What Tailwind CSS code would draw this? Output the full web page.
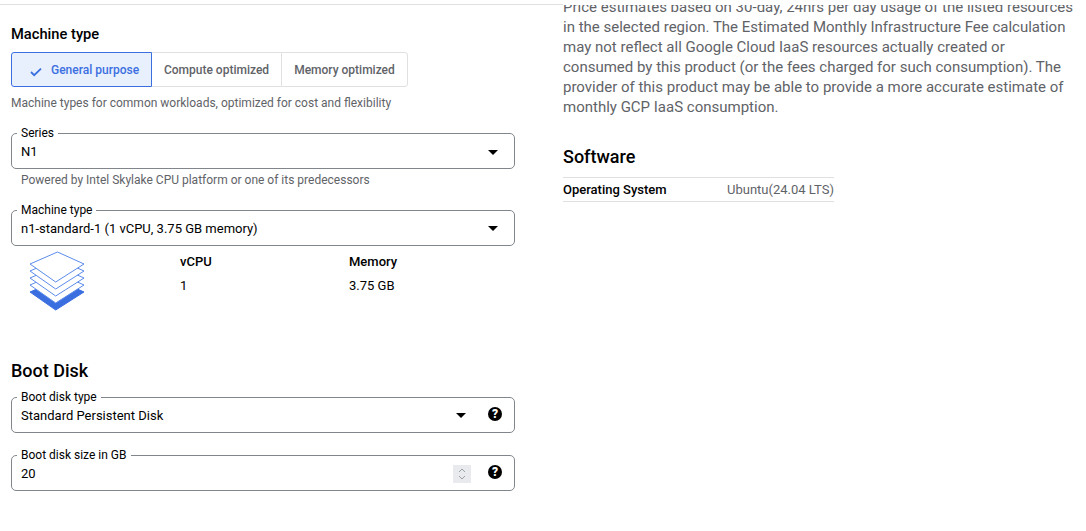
<!DOCTYPE html>
<html lang="en">
<head>
    <meta charset="UTF-8">
    <title>Machine type</title>
    <script src="https://cdn.jsdelivr.net/npm/@tailwindcss/browser@4"></script>
</head>
<body class="bg-white h-[531px] overflow-hidden font-['Roboto',sans-serif] text-black">
    <div class="flex h-full">

        <!-- Left column -->
        <div class="w-[563px] shrink-0 pl-[11px] pr-[48px]">
            <div class="border-t border-[#e0e0e0] mt-[4px] -ml-[11px] -mr-[48px]"></div>

            <h2 class="text-[14.7px] leading-[20px] font-medium mt-[19px]">Machine type</h2>

            <!-- Toggle -->
            <div class="flex h-[35px] mt-[8px] text-[12px] font-medium text-[#5f6368] w-[397px]">
                <div class="w-[141px] flex items-center pl-[17px] gap-[8px] border border-[#3b6fe0] bg-[#e8f0fe] rounded-l-[3px] text-[#3b6fe0]">
                    <svg class="w-[14px] h-[14px] mt-[2px]" viewBox="0 0 14 14" fill="none" stroke="#3b6fe0" stroke-width="1.8"><path d="M2 8l3.2 3.2L12 4.6"/></svg>
                    <span>General purpose</span>
                </div>
                <div class="w-[129px] flex items-center justify-center border-y border-[#e0e0e0]">Compute optimized</div>
                <div class="w-[127px] flex items-center justify-center border border-[#e0e0e0] rounded-r-[3px]">Memory optimized</div>
            </div>
            <p class="text-[12px] leading-[16px] text-[#5f6368] mt-[8px]">Machine types for common workloads, optimized for cost and flexibility</p>

            <!-- Series -->
            <div class="relative h-[36px] mt-[22px] border border-[#80868b] rounded-[5px] flex items-center justify-between pl-[9px] pr-[16px] pt-[2px] text-[13px]">
                <span class="absolute -top-[8px] left-[5px] bg-white px-[4px] text-[12px] leading-[14px]">Series</span>
                <span>N1</span>
                <span class="w-0 h-0 border-x-[5px] border-x-transparent border-t-[5px] border-t-black"></span>
            </div>
            <p class="text-[12px] leading-[16px] text-[#5f6368] pl-[10px] mt-[3px]">Powered by Intel Skylake CPU platform or one of its predecessors</p>

            <!-- Machine type select -->
            <div class="relative h-[36px] mt-[22px] border border-[#80868b] rounded-[5px] flex items-center justify-between pl-[9px] pr-[16px] pt-[1px] text-[13px]">
                <span class="absolute -top-[8px] left-[5px] bg-white px-[4px] text-[12px] leading-[14px]">Machine type</span>
                <span>n1-standard-1 (1 vCPU, 3.75 GB memory)</span>
                <span class="w-0 h-0 border-x-[5px] border-x-transparent border-t-[5px] border-t-black"></span>
            </div>

            <!-- Spec summary -->
            <div class="flex h-[64px] mt-[7px] text-[13px]">
                <svg class="w-[58px] h-[62px] ml-[18px] -mt-[3px] shrink-0" viewBox="0 0 58 62" fill="none">
                    <path d="M1 42L28.5 30 55 42 26.7 60z" fill="#3b6fe0" stroke="#3b6fe0"/>
                    <path d="M1 35L28.5 23 55 35 26.7 53z" fill="#fff" stroke="#5b8bea"/>
                    <path d="M1 28L28.5 16 55 28 26.7 46z" fill="#fff" stroke="#5b8bea"/>
                    <path d="M1 21L28.5 9 55 21 26.7 39z" fill="#fff" stroke="#5b8bea"/>
                    <path d="M1 14L28.5 2 55 14 26.7 32z" fill="#fff" stroke="#5b8bea"/>
                </svg>
                <div class="w-[169px] ml-[93px] pt-[1px]">
                    <div class="font-medium leading-[16px]">vCPU</div>
                    <div class="leading-[16px] mt-[8px]">1</div>
                </div>
                <div class="pt-[1px]">
                    <div class="font-medium leading-[16px]">Memory</div>
                    <div class="leading-[16px] mt-[8px]">3.75 GB</div>
                </div>
            </div>

            <h2 class="text-[18px] leading-[24px] font-medium mt-[42px]">Boot Disk</h2>

            <!-- Boot disk type -->
            <div class="relative h-[36px] mt-[14px] border border-[#80868b] rounded-[5px] flex items-center pl-[9px] pr-[12px] pt-[1px] text-[13px]">
                <span class="absolute -top-[8px] left-[5px] bg-white px-[4px] text-[12px] leading-[14px]">Boot disk type</span>
                <span class="flex-1">Standard Persistent Disk</span>
                <span class="w-0 h-0 border-x-[5px] border-x-transparent border-t-[5px] border-t-black mr-[22px]"></span>
                <svg class="w-[14px] h-[14px] -mt-[4px]" viewBox="0 0 14 14"><circle cx="7" cy="7" r="7" fill="#000"/><text x="7" y="11.2" text-anchor="middle" font-size="12" font-weight="900" font-family="Roboto" fill="#fff">?</text></svg>
            </div>

            <!-- Boot disk size -->
            <div class="relative h-[36px] mt-[22px] border border-[#80868b] rounded-[5px] flex items-center pl-[9px] pr-[12px] pt-[1px] text-[13px]">
                <span class="absolute -top-[8px] left-[5px] bg-white px-[4px] text-[12px] leading-[14px]">Boot disk size in GB</span>
                <span class="flex-1">20</span>
                <span class="w-[18px] h-[18px] bg-[#e8eaed] mr-[17px] flex items-center justify-center">
                    <svg class="w-[10px] h-[14px]" viewBox="0 0 10 14" fill="none" stroke="#9aa0a6"><path d="M2 5l3-3 3 3M2 9l3 3 3-3"/></svg>
                </span>
                <svg class="w-[14px] h-[14px] -mt-[4px]" viewBox="0 0 14 14"><circle cx="7" cy="7" r="7" fill="#000"/><text x="7" y="11.2" text-anchor="middle" font-size="12" font-weight="900" font-family="Roboto" fill="#fff">?</text></svg>
            </div>
        </div>

        <!-- Right column -->
        <div class="w-[523px]">
            <div class="h-[5px] bg-white relative z-10"></div>
            <div class="h-[112px] overflow-hidden relative">
                <p class="w-[512px] text-[15px] leading-[20px] text-[#5f6368] -mt-[8px]">Price estimates based on 30-day, 24hrs per day usage of the listed resources in the selected region. The Estimated Monthly Infrastructure Fee calculation may not reflect all Google Cloud IaaS resources actually created or consumed by this product (or the fees charged for such consumption). The provider of this product may be able to provide a more accurate estimate of monthly GCP IaaS consumption.</p>
            </div>
            <h2 class="text-[18px] leading-[24px] font-medium mt-[28px]">Software</h2>
            <div class="w-[271px] mt-[8px] border-y border-[#e0e0e0] h-[25px] flex items-center justify-between text-[13px] pt-[1px]">
                <span class="font-medium">Operating System</span>
                <span class="text-[#5f6368]">Ubuntu(24.04 LTS)</span>
            </div>
        </div>
    </div>
</body>
</html>
